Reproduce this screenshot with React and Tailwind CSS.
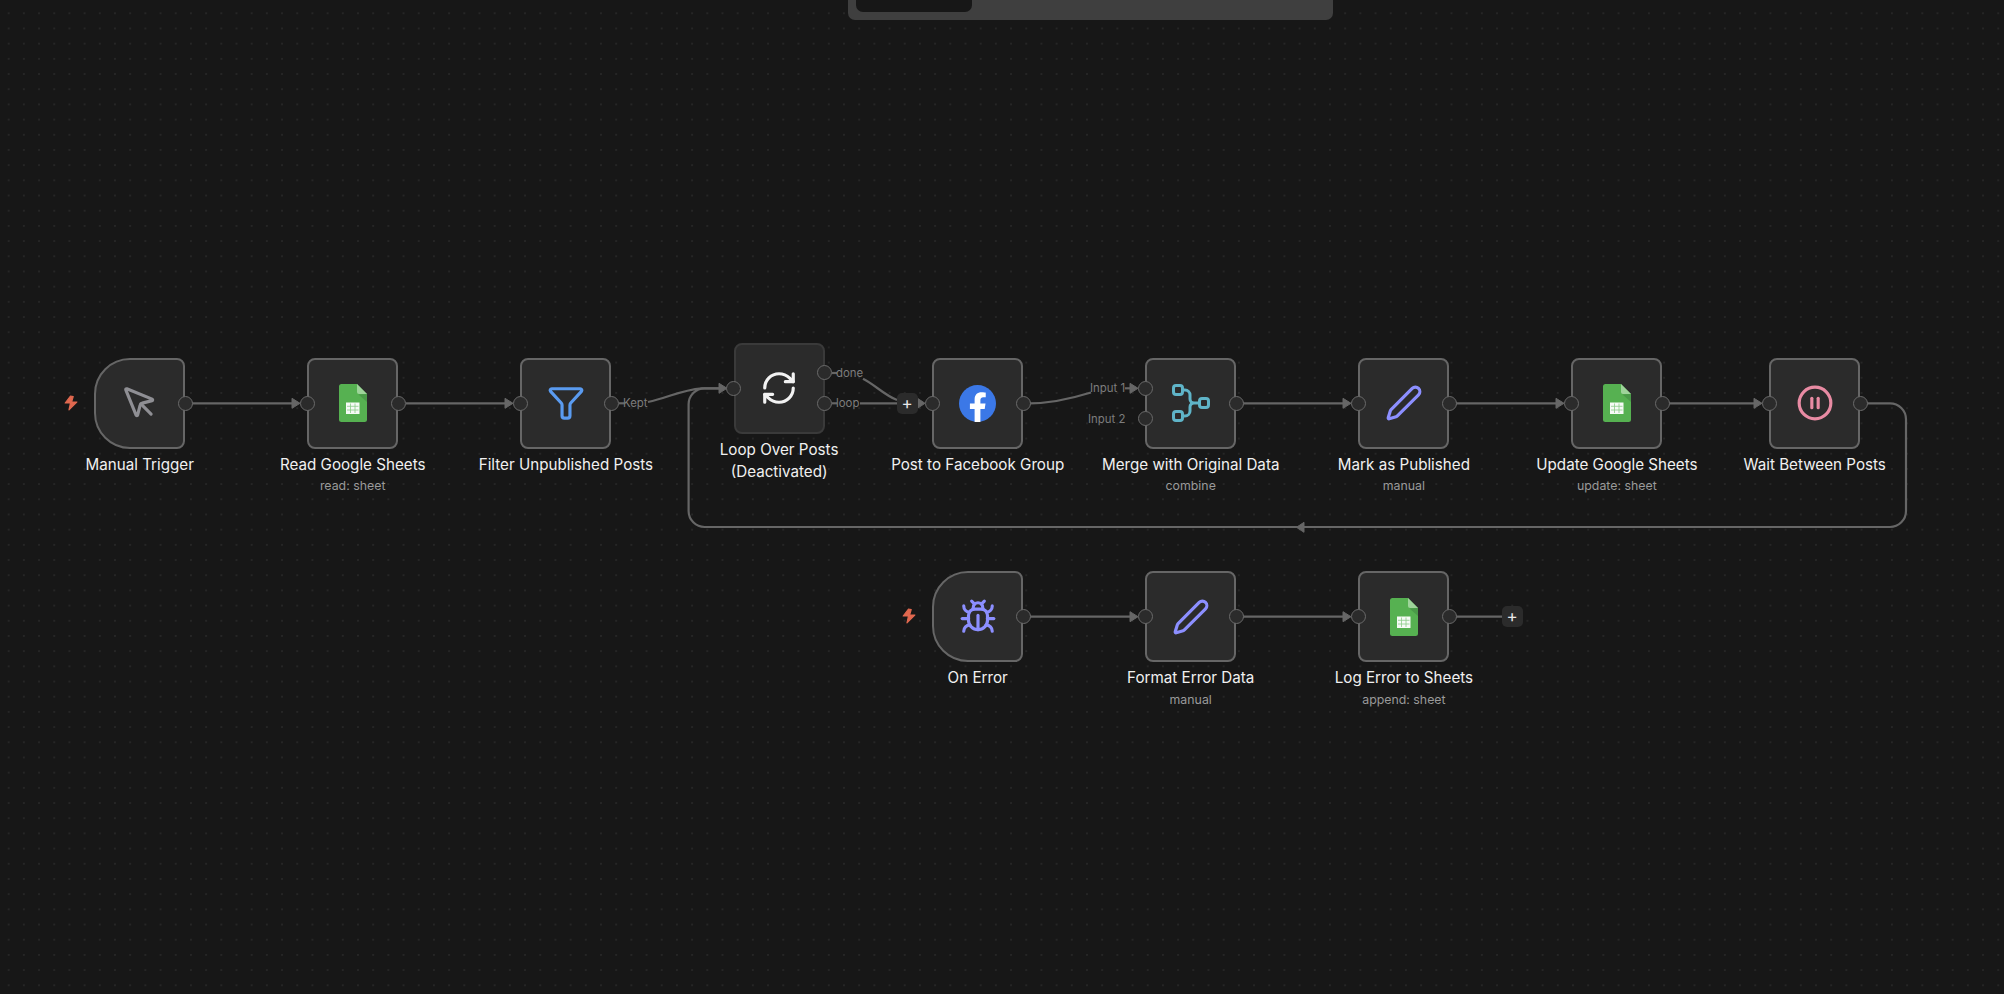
import { MousePointer, Bug, RefreshCw, Pen, CirclePause } from 'lucide-react';

const SheetsIcon = () => (
  <svg width="28" height="38" viewBox="0 0 28 38">
    <path d="M2.5 0H18l10 10v25.500a2.500 2.500 0 0 1-2.500 2.500h-23A2.500 2.500 0 0 1 0 35.500v-33A2.500 2.500 0 0 1 2.500 0z" fill="#56b151" />
    <path d="M19.500 10.500 28 18v-8z" fill="#4a9a48" />
    <path d="M18 0l10 10h-8a2 2 0 0 1-2-2z" fill="#9ed49a" />
    <path d="M7 18.500h13.500v11.500H7z" fill="#f6faf6" />
    <path d="M8 22.300h11.500M8 26h11.500M11.500 19.500v9.500M16 19.500v9.500" stroke="#8ccb89" strokeWidth="0.8" fill="none" />
  </svg>
);

const FilterIcon = () => (
  <svg width="38" height="38" viewBox="0 0 24 24" fill="none" stroke="#5a9bf0" strokeWidth="2" strokeLinejoin="round">
    <path d="M3 3h18a1 1 0 0 1 .74 1.670L15 12a2 2 0 0 0-.5 1.340V20a1.500 1.500 0 0 1-1.500 1.500h-2A1.500 1.500 0 0 1 9.500 20v-6.660A2 2 0 0 0 9 12L2.260 4.670A1 1 0 0 1 3 3z" />
  </svg>
);

const FacebookIcon = () => (
  <svg width="37" height="37" viewBox="0 0 24 24">
    <circle cx="12" cy="12" r="12" fill="#3b78e7" />
    <path d="M16.671 15.543l.532-3.470h-3.328v-2.250c0-.949.465-1.874 1.956-1.874h1.513V4.996s-1.374-.235-2.686-.235c-2.741 0-4.533 1.662-4.533 4.669v2.643H7.078v3.470h3.047v8.385a12.100 12.100 0 0 0 3.750 0v-8.385z" fill="#fff" />
  </svg>
);

const MergeIcon = () => (
  <svg width="38" height="38" viewBox="0 0 38 38" fill="none" stroke="#5fb4c8" strokeWidth="3">
    <rect x="1.500" y="1.500" width="9" height="9" rx="2.500" />
    <rect x="27.500" y="14.500" width="9" height="9" rx="2.500" />
    <rect x="1.500" y="27.500" width="9" height="9" rx="2.500" />
    <path d="M10.500 6h2.500a5 5 0 0 1 5 5v4a4 4 0 0 0 4 4h5.500M10.500 32h2.500a5 5 0 0 0 5-5v-4a4 4 0 0 1 4-4" />
  </svg>
);

const Bolt = ({ className }) => (
  <svg className={className} width="14" height="16" viewBox="0 0 14 16">
    <path d="M6.500 1 1.200 8h5.300L5 14.800 12.800 7H7.600L9.200 1.600z" fill="#e0684f" stroke="#e0684f" strokeWidth="1.200" strokeLinejoin="round" />
  </svg>
);

const sheets = <SheetsIcon />;
const pen = <Pen size={38} color="#8c8fff" />;

const nodes = [
  { pos: 'left-[94.2px] top-[357.8px]', title: ['Manual Trigger'], icon: <MousePointer size={38} color="#8f8f94" />, trigger: true, noInput: true },
  { pos: 'left-[307.2px] top-[357.8px]', title: ['Read Google Sheets'], sub: 'read: sheet', icon: sheets },
  { pos: 'left-[520.4px] top-[357.8px]', title: ['Filter Unpublished Posts'], icon: <FilterIcon /> },
  { pos: 'left-[733.6px] top-[342.8px]', title: ['Loop Over Posts', '(Deactivated)'], icon: <RefreshCw size={38} color="#f2f2f2" />, loop: true },
  { pos: 'left-[932.2px] top-[357.8px]', title: ['Post to Facebook Group'], icon: <FacebookIcon /> },
  { pos: 'left-[1145.2px] top-[357.8px]', title: ['Merge with Original Data'], sub: 'combine', icon: <MergeIcon />, merge: true },
  { pos: 'left-[1358.4px] top-[357.8px]', title: ['Mark as Published'], sub: 'manual', icon: pen },
  { pos: 'left-[1571.4px] top-[357.8px]', title: ['Update Google Sheets'], sub: 'update: sheet', icon: sheets },
  { pos: 'left-[1769.2px] top-[357.8px]', title: ['Wait Between Posts'], icon: <CirclePause size={38} color="#e88ba3" /> },
  { pos: 'left-[932.2px] top-[571.2px]', title: ['On Error'], icon: <Bug size={38} color="#8c8fff" />, trigger: true, noInput: true },
  { pos: 'left-[1145.2px] top-[571.2px]', title: ['Format Error Data'], sub: 'manual', icon: pen },
  { pos: 'left-[1358.4px] top-[571.2px]', title: ['Log Error to Sheets'], sub: 'append: sheet', icon: sheets },
];

const edges = [
  'M192 403.300H293',
  'M406 403.300H506',
  'M619 403.300H624',
  'M648 402C668 398 680 390 702 388.300H720',
  'M832 373H837',
  'M863 378.700C874 384 884 395 897 400',
  'M832 403.300H837',
  'M860 403.300H897',
  'M917 403.300H918',
  'M1030 403.300C1052 403.300 1070 399 1091 392.500',
  'M1125 388.300H1131',
  'M1243 403.300H1345',
  'M1456 403.300H1558',
  'M1669 403.300H1756',
  'M1867 403.300H1890a16 16 0 0 1 16 16V511a16 16 0 0 1-16 16H704.600a16 16 0 0 1-16-16V404.300a16 16 0 0 1 16-16H720',
  'M1030 616.700H1131',
  'M1243 616.700H1345',
  'M1456 616.700H1502',
];

const arrows = [
  '292,398.300 292,408.300 300,403.300',
  '505,398.300 505,408.300 513,403.300',
  '719,383.300 719,393.300 727,388.300',
  '917.500,398.300 917.500,408.300 925,403.300',
  '1130,383.300 1130,393.300 1138,388.300',
  '1343,398.300 1343,408.300 1351,403.300',
  '1556,398.300 1556,408.300 1564,403.300',
  '1754,398.300 1754,408.300 1762,403.300',
  '1304,522.300 1304,532.300 1296.500,527.300',
  '1130,611.700 1130,621.700 1138,616.700',
  '1343,611.700 1343,621.700 1351,616.700',
];

const edgeLabels = [
  { pos: 'left-[623px] top-[396px]', text: 'Kept' },
  { pos: 'left-[836px] top-[366px]', text: 'done' },
  { pos: 'left-[836px] top-[396px]', text: 'loop' },
  { pos: 'left-[1090px] top-[381px]', text: 'Input 1' },
  { pos: 'left-[1088px] top-[412px]', text: 'Input 2' },
];

const Handle = ({ className }) => (
  <div className={`absolute w-[15px] h-[15px] rounded-full bg-[#2b2b2b] border-[1.5px] border-[#6a6a6a] ${className}`} />
);

const WorkflowNode = ({ node }) => (
  <div className={`absolute w-[91px] flex flex-col items-center ${node.pos}`}>
    <div
      className={`relative w-[91px] h-[91px] flex items-center justify-center bg-[#2b2b2b] border-2 ${
        node.loop ? 'border-[#3a3a3a]' : 'border-[#666666]'
      } ${node.trigger ? 'rounded-l-[36px] rounded-r-[8px]' : 'rounded-[8px]'}`}
    >
      {node.icon}
      {node.merge ? (
        <>
          <Handle className="-left-[9.5px] top-[21px]" />
          <Handle className="-left-[9.5px] top-[51.7px]" />
        </>
      ) : (
        !node.noInput && <Handle className="-left-[9.5px] top-[36px]" />
      )}
      {node.loop ? (
        <>
          <Handle className="-right-[9.5px] top-[20.7px]" />
          <Handle className="-right-[9.5px] top-[51px]" />
        </>
      ) : (
        <Handle className="-right-[9.5px] top-[36px]" />
      )}
    </div>
    <div className="w-max mt-[5px] text-center text-[15.2px] leading-[22.6px] text-[#f0f0f0]">
      {node.title.map((line) => (
        <div key={line}>{line}</div>
      ))}
    </div>
    {node.sub && <div className="w-max mt-[1px] text-[12.35px] leading-[18px] text-[#9a9a9a]">{node.sub}</div>}
  </div>
);

const PlusButton = ({ pos }) => (
  <div className={`absolute w-[21px] h-[21px] rounded-[5px] bg-[#2b2b2b] flex items-center justify-center text-[17px] leading-none text-[#e8e8e8] ${pos}`}>
    +
  </div>
);

export default function App() {
  return (
    <div className="relative w-[2004px] h-[994px] overflow-hidden bg-[#171717] font-['Inter',sans-serif] bg-[radial-gradient(circle_at_center,#3a3a3a_0.5px,transparent_0.8px)] bg-size-[15.2px_15.2px] bg-position-[1.1px_5.7px]">
      {/* toolbar cut off at the top */}
      <div className="absolute left-[848px] top-0 w-[485px] h-[20px] bg-[#3f3f3f] rounded-b-[7px]">
        <div className="ml-[8px] w-[116px] h-[12px] bg-[#171717] rounded-b-[7px]" />
      </div>

      <svg className="absolute inset-0" width="2004" height="994" fill="none">
        {edges.map((d) => (
          <path key={d} d={d} stroke="#666666" strokeWidth="2.2" />
        ))}
        {arrows.map((p) => (
          <polygon key={p} points={p} fill="#666666" stroke="#666666" strokeWidth="1" strokeLinejoin="round" />
        ))}
      </svg>

      <Bolt className="absolute left-[64px] top-[395px]" />
      <Bolt className="absolute left-[902px] top-[608px]" />

      {nodes.map((node) => (
        <WorkflowNode key={node.pos} node={node} />
      ))}

      {edgeLabels.map((l) => (
        <div key={l.text} className={`absolute text-[11.4px] leading-[14px] text-[#7d7d7d] ${l.pos}`}>
          {l.text}
        </div>
      ))}

      <PlusButton pos="left-[896.5px] top-[393px]" />
      <PlusButton pos="left-[1501.5px] top-[606px]" />
    </div>
  );
}
